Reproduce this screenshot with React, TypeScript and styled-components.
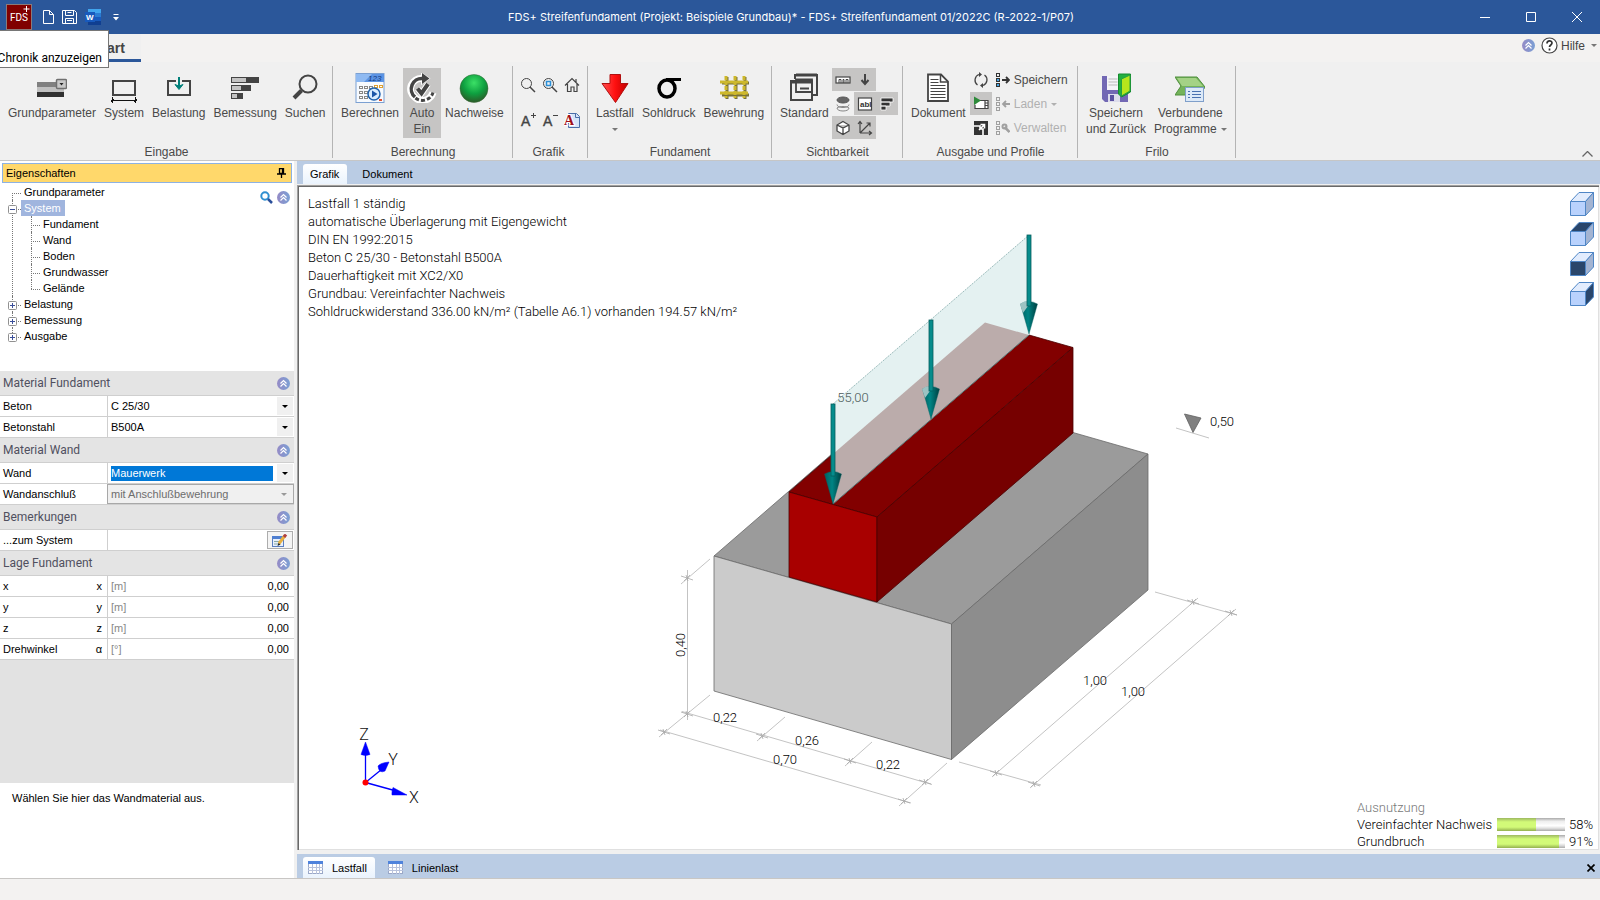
import React from 'react';
import styled, { createGlobalStyle, css } from 'styled-components';

const SANS = '"Liberation Sans", Arial, sans-serif';
const ROBOTO = 'Roboto, sans-serif';

const Global = createGlobalStyle`
  * { box-sizing: border-box; }
  body { margin: 0; background: #f3f2f1; color: #000; font-family: ${SANS}; font-size: 12px; }
  button, select, input { font: inherit; color: inherit; }
  button { border: 0; padding: 0; background: none; cursor: pointer; }
  svg { display: block; flex: none; }
`;

const App_ = styled.div`
  min-height: 100vh;
  display: flex;
  flex-direction: column;
  position: relative;
`;

/* ---------- title bar ---------- */
const TitleBar = styled.header`
  height: 34px;
  display: grid;
  grid-template-columns: 1fr auto 1fr;
  align-items: center;
  background: #2b579a;
  color: #fff;
`;
const QuickAccess = styled.div`
  display: flex;
  align-items: center;
  gap: 8px;
  padding-left: 6px;
`;
const AppLogo = styled.div`
  width: 26px;
  height: 26px;
  margin-right: 3px;
`;
const Title = styled.h1`
  margin: 0;
  padding-right: 18px;
  font: 400 11px/16px Inter, sans-serif;
  white-space: nowrap;
`;
const WindowButtons = styled.div`
  display: flex;
  justify-content: flex-end;
`;
const WindowButton = styled.button`
  width: 46px;
  height: 34px;
  display: grid;
  place-items: center;
`;
const Tooltip = styled.div`
  position: absolute;
  left: 0;
  top: 30px;
  z-index: 2;
  width: 109px;
  height: 38px;
  padding-top: 19px;
  display: flex;
  justify-content: flex-end;
  padding-right: 6px;
  overflow: hidden;
  background: #fff;
  border: 1px solid #767676;
  border-left: 0;
  font: 12px/16px ${ROBOTO};
  white-space: nowrap;
`;

/* ---------- ribbon ---------- */
const RibbonTabs = styled.nav`
  height: 28px;
  display: flex;
  align-items: stretch;
  padding-left: 77px;
  background: #f3f2f1;
`;
const RibbonTab = styled.button`
  padding: 2px 16px 0;
  background: #f0f0f0;
  border-bottom: 3px solid #2b579a;
  color: #444;
  font-size: 14px;
  font-weight: 700;
`;
const HelpArea = styled.div`
  margin-left: auto;
  padding: 0 3px 5px 0;
  display: flex;
  align-items: center;
  gap: 6px;
  color: #444;
`;
const HelpButton = styled.button`
  display: flex;
  align-items: center;
  gap: 3px;
`;
const Ribbon = styled.div`
  height: 99px;
  display: flex;
  align-items: stretch;
  padding-top: 4px;
  background: #f0f0f0;
  border-bottom: 1px solid #c6c6c6;
  color: #4a4a4a;
`;
const Group = styled.section<{ $w: number; $tight?: boolean }>`
  flex: 0 0 ${p => p.$w}px;
  height: 92px;
  padding: 2px 0 0 ${p => (p.$tight ? 4 : 8)}px;
  display: flex;
  flex-direction: column;
  justify-content: space-between;
  border-right: 1px solid #b4b4b4;
`;
const GroupBody = styled.div<{ $gap?: number }>`
  display: flex;
  align-items: flex-start;
  gap: ${p => p.$gap ?? 8}px;
`;
const GroupName = styled.h2`
  margin: 0 7px 0 0;
  font: 400 12px/12px ${SANS};
  text-align: center;
`;
const BigButton = styled.button<{ $on?: boolean }>`
  height: 70px;
  padding: 5px 0 1px;
  display: flex;
  flex-direction: column;
  align-items: center;
  line-height: 16px;
  white-space: nowrap;
  ${p => p.$on && css`
    width: 38px;
    background: #c6c5c4;
  `}
  > svg { margin-bottom: 2px; }
`;
const WithCaret = styled.span`
  height: 16px;
  display: flex;
  align-items: center;
  gap: 4px;
`;
const IconGrid = styled.div<{ $cols: number; $row: number }>`
  display: grid;
  grid-template-columns: repeat(${p => p.$cols}, 22px);
  grid-auto-rows: ${p => p.$row}px;
  row-gap: 1px;
`;
const IconButton = styled.button<{ $on?: boolean }>`
  display: grid;
  place-items: center;
  background: ${p => (p.$on ? '#c6c5c4' : 'transparent')};
`;
const ProfileList = styled.div`
  display: grid;
  grid-auto-rows: 24px;
`;
const ProfileButton = styled.button`
  display: flex;
  align-items: center;
  gap: 4px;
  &:disabled { color: #b0b0b0; }
`;
const Collapse = styled.button`
  margin: auto 7px 3px auto;
`;

/* ---------- workspace ---------- */
const Workspace = styled.main`
  flex: 1;
  display: grid;
  grid-template-columns: 294px minmax(0, 1fr);
  column-gap: 3px;
  background: #f0f0f0;
`;
const SidePanel = styled.aside`
  display: flex;
  flex-direction: column;
  background: #fff;
  font-size: 11px;
  line-height: 16px;
`;
const PanelTitle = styled.div`
  height: 20px;
  margin: 2px 2px 1px;
  padding: 0 5px 0 3px;
  display: flex;
  align-items: center;
  justify-content: space-between;
  background: #ffd86b;
  border: 1px solid #8db2e3;
`;
const TreeArea = styled.div`
  height: 187px;
  display: flex;
  justify-content: space-between;
`;
const TreeTools = styled.div`
  display: flex;
  align-items: center;
  align-self: flex-start;
  gap: 4px;
  padding: 7px 4px 0 0;
`;
const Tree = styled.ul`
  list-style: none;
  margin: 0;
  padding: 0 0 0 12px;
`;
const SubTree = styled.ul`
  list-style: none;
  margin: 0;
  padding: 0 0 0 7px;
`;
const TreeItem = styled.li<{ $first?: boolean; $last?: boolean }>`
  position: relative;
  padding-left: 12px;
  &::before {
    content: '';
    position: absolute;
    left: 0;
    top: ${p => (p.$first ? 9 : 0)}px;
    bottom: ${p => (p.$last ? 'auto' : '0')};
    height: ${p => (p.$last ? '9px' : 'auto')};
    border-left: 1px dotted #777;
  }
  &::after {
    content: '';
    position: absolute;
    left: 0;
    top: 9px;
    width: 9px;
    border-top: 1px dotted #777;
  }
`;
const TreeLabel = styled.button<{ $selected?: boolean }>`
  display: block;
  height: 16px;
  padding: 0 6px 0 0;
  text-align: left;
  ${p => p.$selected && css`
    margin-left: -3px;
    padding: 0 4px 0 3px;
    background: #a0b5de;
    color: #fff;
  `}
`;
const Toggle = styled.button`
  position: absolute;
  left: -4px;
  top: 5px;
  z-index: 1;
`;
const SectionHead = styled.div`
  height: 25px;
  padding: 0 4px 0 3px;
  display: flex;
  align-items: center;
  justify-content: space-between;
  background: #e4e4e4;
  border-bottom: 1px solid #cfcfcf;
  color: #50505f;
  font: 12px/16px ${ROBOTO};
`;
const PropRow = styled.div`
  height: 21px;
  display: grid;
  grid-template-columns: 107px minmax(0, 1fr);
  border-bottom: 1px solid #cfcfcf;
`;
const PropLabel = styled.label`
  padding: 0 5px 0 3px;
  display: flex;
  align-items: center;
  justify-content: space-between;
`;
const PropCell = styled.div<{ $disabled?: boolean }>`
  display: flex;
  align-items: center;
  padding: 1px;
  border-left: 1px solid #cfcfcf;
  ${p => p.$disabled && css`
    background: #f0f0f0;
    border: 1px solid #a8a8a8;
    color: #6d6d6d;
  `}
`;
const Select = styled.select<{ $focus?: boolean }>`
  flex: 1;
  height: 15px;
  margin: 0 4px 0 2px;
  padding: 0;
  appearance: none;
  border: 0;
  border-radius: 0;
  outline: 0;
  opacity: 1;
  line-height: 15px;
  background: ${p => (p.$focus ? '#0078d7' : 'transparent')};
  color: ${p => (p.$focus ? '#fff' : 'inherit')};
`;
const DropMark = styled.span<{ $disabled?: boolean }>`
  width: 16px;
  align-self: stretch;
  display: grid;
  place-items: center;
  background: #f0f0f0;
  color: ${p => (p.$disabled ? '#999' : '#000')};
`;
const Unit = styled.span`
  padding-left: 2px;
  color: #888;
`;
const TextField = styled.input`
  flex: 1;
  min-width: 0;
  height: 18px;
  padding: 0 4px;
  border: 0;
  outline: 0;
  background: transparent;
  text-align: right;
`;
const EditButton = styled.button`
  width: 26px;
  height: 18px;
  display: grid;
  place-items: center;
  background: #f4f4f4;
  border: 1px solid #adadad;
`;
const Filler = styled.div`
  height: 123px;
  background: #e2e2e2;
`;
const Hint = styled.p`
  flex: 1;
  margin: 0;
  padding: 7px 12px;
`;

/* ---------- drawing pane ---------- */
const Pane = styled.section`
  display: flex;
  flex-direction: column;
`;
const DocTabs = styled.div<{ $bottom?: boolean }>`
  height: ${p => (p.$bottom ? 24 : 23)}px;
  padding: 3px 5px 0 6px;
  display: flex;
  align-items: stretch;
  background: #bacce4;
  font-size: 11px;
`;
const DocTab = styled.button<{ $on?: boolean; $icon?: boolean }>`
  display: flex;
  align-items: center;
  gap: 9px;
  padding: ${p => (p.$icon ? '0 8px 0 5px' : '0 8px 0 7px')};
  margin-right: 8px;
  border-radius: 3px 3px 0 0;
  background: ${p => (p.$on ? 'linear-gradient(#fff, #eaf3fd)' : 'transparent')};
`;
const CloseTab = styled.button`
  margin-left: auto;
`;
const Canvas = styled.div`
  position: relative;
  flex: 1;
  min-height: 480px;
  margin: 1px 1px 4px 0;
  background: #fff;
  border: solid #a0a0a0;
  border-width: 1px 0 0 1px;
  box-shadow: inset 1px 1px #696969, inset -1px -1px #e0e0e0;
`;
const Model = styled.svg`
  position: absolute;
  inset: 0;
  width: 100%;
  height: 100%;
`;
const Info = styled.div`
  position: absolute;
  left: 10px;
  top: 9px;
  font: 300 13px/18px ${ROBOTO};
  color: #000;
`;
const ViewCubes = styled.div`
  position: absolute;
  right: 5px;
  top: 6px;
  display: grid;
  gap: 6px;
`;
const Usage = styled.dl`
  position: absolute;
  right: 6px;
  bottom: 0;
  margin: 0;
  display: grid;
  grid-template-columns: 136px 68px auto;
  column-gap: 4px;
  align-items: center;
  font: 300 13px/17px ${ROBOTO};
  color: #000;
  dt, dd { margin: 0; white-space: nowrap; }
`;
const UsageTitle = styled.dt`
  grid-column: 1 / -1;
  color: #777;
`;
const Bar = styled.dd`
  height: 13px;
  display: flex;
  background: linear-gradient(#aaa, #eee 25%, #fff 60%, #ddd 80%, #aaa);
`;
const BarFill = styled.span`
  background: linear-gradient(#9db860, #d2fa78 30%, #d2fa78 70%, #93b04f);
`;
const StatusBar = styled.footer`
  height: 22px;
  background: #f3f2f1;
  border-top: 1px solid #c8c6c4;
`;

/* ---------- icons ---------- */
const Caret = ({ color = 'currentColor' }: { color?: string }) => (
  <svg width="6" height="3" viewBox="0 0 6 3"><path d="M0 0h6L3 3z" fill={color} /></svg>
);
const RoundUp = () => (
  <svg width="13" height="13" viewBox="0 0 13 13">
    <defs><linearGradient id="ru" x1="0" y1="0" x2="1" y2="0"><stop offset="0" stopColor="#958bc6" /><stop offset="1" stopColor="#7b9fd4" /></linearGradient></defs>
    <circle cx="6.5" cy="6.5" r="6.5" fill="url(#ru)" />
    <path d="M3.500 6.500l3-3 3 3M3.500 9.500l3-3 3 3" fill="none" stroke="#fff" strokeWidth="1.200" />
  </svg>
);
const I = ({ children, s = 30 }: { children: React.ReactNode; s?: number }) => (
  <svg width={s} height={s} viewBox={`0 0 ${s} ${s}`} fill="none" stroke="#444" strokeWidth="2">{children}</svg>
);
const IcoParams = () => (
  <I><g stroke="none"><path d="M0 9h27v5H0z" fill="#808080" /><path d="M0 14h27v5H0z" fill="#c0c0c0" /><path d="M0 19h27v5H0z" fill="#303030" /></g>
    <rect x="19.500" y="6.500" width="10" height="9" rx="1" fill="#c8c8c8" stroke="#707070" strokeWidth="1.500" /><path d="M22.500 10h4l-2 2.500z" fill="#222" stroke="none" /></I>
);
const IcoSystem = () => (
  <I><rect x="4" y="8" width="22" height="14" /><path d="M2 27.500h26M3.500 24v6M26.500 24v6M2 29l3-3M25 29l3-3" stroke="#111" strokeWidth="1" /></I>
);
const IcoLoad = () => (
  <I><rect x="4" y="8" width="22" height="14" /><path d="M12 8h6" stroke="#f0f0f0" strokeWidth="3" /><path d="M15 4v10" stroke="#00807a" /><path d="M11 11.500l4 5 4-5-4 1.500z" fill="#00807a" stroke="#00807a" strokeWidth="1" /></I>
);
const IcoDesign = () => (
  <I><g stroke="none"><path d="M1 4h28v6H1zM1 12h20v6H1zM1 20h12v6H1z" fill="#444" /><path d="M2 5h14v4H2zM2 13h9v4H2zM2 21h5v4H2z" fill="#c4c4c4" /></g></I>
);
const IcoSearch = () => (
  <I><circle cx="18" cy="11" r="8.500" /><path d="M11.500 17.500L4 25" strokeWidth="4" /></I>
);
const IcoCalc = () => (
  <I><rect x="1" y=".5" width="28" height="29" fill="#f7fafe" stroke="#7ba0d2" strokeWidth="1" />
    <path d="M1 1h28v8H1z" fill="#5b93e4" stroke="none" /><path d="M1 1h16L9 9H1z" fill="#8fbaf2" stroke="none" />
    <text x="13" y="8" fontSize="8" fontStyle="italic" fontFamily="Liberation Sans" fill="#123a80" stroke="none">123</text>
    <g fill="#fff" stroke="#888" strokeWidth="1">
      {[13, 18, 23].map(y => [4, 9, 14].map(x => <rect key={`${x}${y}`} x={x + 0.5} y={y + 0.5} width="3" height="2" />))}
      <g stroke="#e0a030"><rect x="19.500" y="12.500" width="3" height="2" /><rect x="24.500" y="12.500" width="3" height="2" /></g>
    </g>
    <path d="M24 26h3v2h-3z" fill="#e05030" stroke="none" />
    <circle cx="19" cy="21" r="6" fill="#d8ecff" stroke="#1f62ae" strokeWidth="1.500" /><path d="M17 17.500l5.500 3.500-5.500 3.500z" fill="#1b56a8" stroke="none" /></I>
);
const IcoAuto = () => (
  <I>
    <g stroke="#fff" strokeWidth="7"><path d="M18 5.500h-3A10.500 10.500 0 0 0 8 24.500A11 11 0 0 0 26 19.500" /></g>
    <path d="M14 -1l9.500 6.500L14 12z" fill="#fff" stroke="none" />
    <path d="M17 5.500h-1.500A10.500 10.500 0 0 0 8 24" strokeWidth="3.500" />
    <path d="M15 0l7.500 5.500-7.500 5.500z" fill="#444" stroke="none" />
    <path d="M8.500 25A11 11 0 0 0 26 19.500" strokeWidth="3" strokeDasharray="4 2" />
    <path d="M10.500 15.500l4 5 6.500-9.500" stroke="#fff" strokeWidth="6" /><path d="M10.500 15.500l4 5 6.500-9.500" strokeWidth="4" />
  </I>
);
const IcoOk = () => (
  <I><defs><radialGradient id="gr" cx=".5" cy=".3" r=".7"><stop offset="0" stopColor="#3be066" /><stop offset=".55" stopColor="#0ea040" /><stop offset="1" stopColor="#2c5a28" /></radialGradient></defs>
    <circle cx="15" cy="15.500" r="14" fill="url(#gr)" stroke="#3a6a3a" strokeWidth=".5" /></I>
);
const IcoZoom = () => <I s={16}><circle cx="6.500" cy="6.500" r="5" strokeWidth="1" /><path d="M10 10l5 5" strokeWidth="1.500" /></I>;
const IcoZoomBox = () => <I s={16}><circle cx="6.500" cy="6.500" r="5" strokeWidth="1" /><rect x="4.500" y="4.500" width="4" height="4" stroke="#2a8fd8" strokeWidth="1.500" /><path d="M10 10l5 5" strokeWidth="1.500" /></I>;
const IcoHome = () => <I s={16}><path d="M1 8.500L8 1.500l7 7M3.500 7v7.500H7V10h3v4.500h3V7M12 5V2" strokeWidth="1.200" /></I>;
const IcoFont = ({ sign }: { sign: string }) => (
  <I s={16}><text x="1" y="14" fontSize="14" fontFamily="Liberation Sans" fill="#444" stroke="#444" strokeWidth=".4">A</text><path d={sign} strokeWidth="1" /></I>
);
const IcoFontPage = () => (
  <I s={16}><path d="M4.500 1.500h8l3 3v11h-11z" fill="#d5e4f8" stroke="#4a6ea8" strokeWidth="1" /><path d="M11.500 1.500v4h4" stroke="#4a6ea8" strokeWidth="1" /><text x="0" y="13" fontSize="14" fontWeight="700" fontFamily="Liberation Serif" fill="#a01018" stroke="#fff" strokeWidth="2" paintOrder="stroke">A</text></I>
);
const IcoRedArrow = () => (
  <I><defs><linearGradient id="ra"><stop offset="0" stopColor="#ff5050" /><stop offset=".5" stopColor="#ff1010" /><stop offset="1" stopColor="#c00000" /></linearGradient></defs>
    <path d="M10 1.500h10.500v9H28L15.500 29.500 2 10.500h8z" fill="url(#ra)" stroke="#b01010" strokeWidth="1" /></I>
);
const IcoSigma = () => <I><ellipse cx="13" cy="15.500" rx="8" ry="8.500" stroke="#000" strokeWidth="3.500" /><path d="M12 6.500h15" stroke="#000" strokeWidth="3" /></I>;
const IcoMesh = () => (
  <I><g stroke="#77713a" strokeWidth="3"><path d="M3 10h27M3 22h27M8 4v22M17 4v22M26 4v22" /></g><g stroke="#cdb82c" strokeWidth="3"><path d="M1 9h28M1 20h28" /><path d="M7 3v22M16 3v22M25 3v22" strokeDasharray="4 1" /></g></I>
);
const IcoWindows = () => (
  <I><path d="M6 6V2h22v20h-4" /><path d="M7 2h21" strokeWidth="3" /><path d="M2 8h21v19H2z" fill="#f0f0f0" /><path d="M2 9h21" strokeWidth="3" /><path d="M7 13V6.500h16V19H7v-6M11 15.500h9" strokeWidth="1.800" /></I>
);
const IcoRuler = () => <I s={16}><rect x="1" y="5" width="14" height="6" fill="#fff" strokeWidth="1.200" /><path d="M4 11V7.500h2V11M8 11V7.500h1V11M11 11V7.500h2V11" strokeWidth="1" /></I>;
const IcoDown = () => <I s={16}><path d="M8 2v10" strokeWidth="2" /><path d="M4.500 8L8 12 11.500 8" strokeWidth="2" /></I>;
const IcoLayers = () => <I s={16}><ellipse cx="8" cy="4" rx="6" ry="3" fill="#666" stroke="#555" strokeWidth="1" /><path d="M2 8.500c0 4 12 4 12 0M2 12c0 4 12 4 12 0M2 12c2-2 10-2 12 0" stroke="#888" strokeWidth="1" /></I>;
const IcoAbl = () => <I s={16}><rect x="1.500" y="2" width="13" height="12" fill="#fff" strokeWidth="1.200" /><text x="3" y="11" fontSize="8" fontWeight="700" fontFamily="Liberation Sans" fill="#333" stroke="none">abl</text></I>;
const IcoBars = () => <I s={16}><path d="M2 2h12v4H2zM2 6h9v4H2zM2 10h5v4H2z" fill="#333" stroke="#fff" strokeWidth=".8" /></I>;
const IcoCube = () => <I s={16}><path d="M8 1.500l6 3.500v6l-6 3.500L2 11V5zM2 5l6 3 6-3M8 8v6.500" fill="#fff" strokeWidth="1.300" /></I>;
const IcoAxes = () => <I s={16}><path d="M3 13V2M3 13h11M3 13L13 3M1 4l2-2.500L5 4M12 11l2.500 2-2.500 2M9.500 3H13v3.500" strokeWidth="1.200" /></I>;
const IcoDoc = () => (
  <I><path d="M5 1.500h13l7 7V28H5z" fill="#fff" strokeWidth="1.800" /><path d="M17.500 2v7H25" strokeWidth="1.500" /><path d="M7.500 6.500h8M7.500 9.500h8M7.500 12.500h15M7.500 15.500h15M7.500 18.500h15M7.500 21.500h15M7.500 24.500h15" strokeWidth="1.200" /></I>
);
const IcoRefresh = () => <I s={16}><path d="M6 2.500A6 6 0 0 0 4.500 13M10 13.500A6 6 0 0 0 11.500 3" strokeWidth="1.300" /><path d="M6 0v5l3-2.500zM10 11v5l-3-2.500z" fill="#444" stroke="none" /></I>;
const IcoPlay = () => <I s={16}><path d="M6 4.500h9v8H2V9" fill="#fff" strokeWidth="1.200" /><path d="M12 5v8" strokeWidth="1.200" /><path d="M12 7h3M12 9.500h3" strokeWidth="1" /><path d="M1 .5L8 4.500 1 9z" fill="#2d8a3a" stroke="none" /></I>;
const IcoExpand = () => <I s={16}><path d="M1 1h14v14H1z" fill="#333" stroke="none" /><path d="M1 6h6v3h3v6M6 10l5-5M7.500 4.500h4v4" stroke="#fff" strokeWidth="1.600" /></I>;
const IcoProfile = ({ kind }: { kind: 'save' | 'load' | 'manage' }) => {
  const c = kind === 'save' ? '#333' : '#a0a0a0';
  const fill = kind === 'save' ? '#4aa8e8' : 'none';
  return (
    <svg width="14" height="14" viewBox="0 0 14 14" fill="none" stroke={c}>
      <rect x=".5" y=".5" width="3" height="3" /><rect x=".5" y="5.500" width="3" height="3" fill={fill} /><rect x=".5" y="10.500" width="3" height="3" fill={fill} />
      {kind === 'save' && <path d="M6 7h7M10 4l3 3-3 3" strokeWidth="1.800" />}
      {kind === 'load' && <path d="M14 7H7M10 4L7 7l3 3" strokeWidth="1.800" />}
      {kind === 'manage' && <><path d="M8.500 6l5 5" strokeWidth="2.500" /><circle cx="8.500" cy="5.500" r="2" strokeWidth="2" /></>}
    </svg>
  );
};
const IcoSaveBack = () => (
  <I><g stroke="none"><path d="M1 3h26v26H4l-3-3z" fill="#7268b4" /><path d="M6 3h13v14H6z" fill="#f4f4f8" /><path d="M7 21h12v8H7z" fill="#dcdcec" /><path d="M9 22h4v6H9z" fill="#5a50a0" /></g>
    <path d="M7.500 6h9M7.500 9h9M7.500 12h9" stroke="#bbb" strokeWidth="1" />
    <path d="M17.500 1h12v18l-9 5-3-3z" fill="#22b040" stroke="#168a30" strokeWidth="1" /><path d="M20.500 6l8.500-4v16l-8.500 5z" fill="#b7e61c" stroke="#25a040" strokeWidth="1" /></I>
);
const IcoLinked = () => (
  <I><path d="M0 4h22l8 10-5 8H0l6-9z" fill="#74b35a" stroke="#4f8f3c" strokeWidth="1" /><path d="M2 5h19l7 8H7z" fill="#a4d286" stroke="none" />
    <rect x="10.500" y="14.500" width="18" height="14" fill="#dce9f8" stroke="#7f9fca" strokeWidth="1" /><path d="M13 18.500h2M17 18.500h9M13 21.500h2M17 21.500h9M13 24.500h2M17 24.500h9" stroke="#4a72b0" strokeWidth="1" /></I>
);
const IcoTable = () => (
  <svg width="15" height="13" viewBox="0 0 15 13"><rect x=".5" y=".5" width="14" height="12" fill="#fff" stroke="#9aa8c8" /><path d="M0 0h15v3H0z" fill="#4f83dc" /><path d="M0 6.500h15M0 9.500h15M4.500 3v10M8.500 3v10M11.500 3v10" stroke="#b8c2dc" /></svg>
);
const ToggleBox = ({ open }: { open?: boolean }) => (
  <svg width="9" height="9" viewBox="0 0 9 9"><rect x=".5" y=".5" width="8" height="8" rx="1" fill="#fff" stroke="#919191" /><path d={open ? 'M2 4.500h5' : 'M2 4.500h5M4.500 2v5'} stroke="#3b4f9a" /></svg>
);
const ViewCube = ({ dark }: { dark?: 'top' | 'front' | 'side' }) => (
  <svg width="24" height="24" viewBox="0 0 24 24" stroke="#4f86c6" strokeWidth="1">
    <path d="M.5 9.500L9 .5h14.500L15.500 9.500z" fill={dark === 'top' ? '#2a466b' : '#e2ecfd'} />
    <path d="M15.500 9.500l8-9v14.500l-8 8.500z" fill={dark === 'side' ? '#2a466b' : '#a3b4d2'} />
    <path d="M.5 9.500h15v14H.5z" fill={dark === 'front' ? '#2a466b' : '#b9d2fd'} />
  </svg>
);

/* ---------- 3D model ---------- */
const LoadArrow = ({ x, top, tip, veiled }: { x: number; top: number; tip: number; veiled?: boolean }) => (
  <g>
    <path d={`M${x - 8.5} ${tip - 30}q8.500 -5 17 0L${x} ${tip}z`} fill="url(#cone)" stroke="#04605f" strokeWidth=".4" />
    {veiled && <path d={`M${x - 9} ${tip - 30}q5 -4 8 -2v4l-5 7z`} fill="#9cc3c3" />}
    <rect x={x - 2} y={top} width="4" height={tip - 28 - top} fill="#068c8c" stroke="#055e5e" strokeWidth=".8" />
  </g>
);
const Tick = ({ x, y }: { x: number; y: number }) => (
  <path d={`M${x - 6} ${y - 2}l12 4M${x - 3} ${y + 3}l6 -6M${x - 1} ${y - 3}l2 6`} />
);
const ticks: [number, number][] = [
  [687, 578], [687, 714], [762, 736], [850, 761], [925, 782], [664, 732], [904, 801],
  [996, 773], [1193, 602], [1034, 784], [1231, 613],
];
const dims: [number, number, string][] = [
  [725, 722, '0,22'], [807, 745, '0,26'], [785, 764, '0,70'], [888, 769, '0,22'], [1095, 685, '1,00'], [1133, 696, '1,00'], [1222, 426, '0,50'],
];
const FoundationModel = () => (
  <Model viewBox="298 186 1301 664" preserveAspectRatio="xMidYMid meet" role="img" aria-label="Streifenfundament">
    <defs><linearGradient id="cone"><stop offset="0" stopColor="#005f5f" /><stop offset=".45" stopColor="#008484" /><stop offset="1" stopColor="#003f40" /></linearGradient></defs>
    <g stroke="#6a6a6a" strokeWidth=".8" strokeLinejoin="round">
      <path d="M714 556L951.500 624 1148 454 910.500 386z" fill="#9b9b9b" />
      <path d="M714 556L951.500 624V759.500L714 691z" fill="#cbcbcb" />
      <path d="M951.500 624L1148 454V590L951.500 759.500z" fill="#8d8d8d" />
    </g>
    <g stroke="#4a0000" strokeWidth=".8" strokeLinejoin="round">
      <path d="M789 492L985 322.500 1073 347.500 877 517z" fill="#820000" />
      <path d="M789 492L877 517V602L789 577z" fill="#a80000" />
      <path d="M877 517L1073 347.500V433L877 602z" fill="#760000" />
    </g>
    <path d="M833 404L1029 235V335L833 504z" fill="#e4f1f1" />
    <path d="M833 454L985 322.500 1029 335 833 504z" fill="#bbacab" />
    <path d="M833 404L1029 235" stroke="#9cbcbc" strokeWidth="1" strokeDasharray="2 1" />
    <path d="M833 504L1029 335" stroke="#506b6b" strokeWidth="1" />
    <LoadArrow x={833} top={404} tip={504} />
    <LoadArrow x={931} top={320} tip={419} veiled />
    <LoadArrow x={1029} top={235} tip={334} veiled />
    <g fill="none" stroke="#bcbcbc" strokeWidth=".9">
      <path d="M687.500 570V720M681 584l29-25M659 737l51-42M682 711.500l250 73M660 730l251 73M757 741l28-24M845 766l27-24M899 806l48-43M959 762l82 23M1155 592l82 23M992 777l206-179M1030 788l206-179" />
      <path d="M1176 428l33 10" />
      <g stroke="#a8a8a8" strokeWidth=".8">{ticks.map(([x, y]) => <Tick key={`${x}-${y}`} x={x} y={y} />)}</g>
    </g>
    <path d="M1184.500 414l16.500 4-8 14.500z" fill="#808080" stroke="#606060" strokeWidth=".8" />
    <g fontFamily="Roboto" fontWeight="300" fontSize="13" fill="#000" textAnchor="middle">
      {dims.map(([x, y, t]) => <text key={`${x}`} x={x} y={y}>{t}</text>)}
      <text transform="translate(685 645) rotate(-90)">0,40</text>
      <text x="853" y="402" fill="#4a5a5a">55,00</text>
    </g>
    <g stroke="#00f" strokeWidth="1.300" fill="#00f">
      <path d="M365.500 782.500V750M365.500 782.500l16-13M365.500 782.500l29 8" />
      <path d="M365.500 742l4.500 12.500q-4.500 2-9 0zM389 762l-4 9q-6 3-7-5q2-3 11-4zM407 795l-14-7.500q-1.500 4-1 7.500z" strokeWidth=".5" />
      <circle cx="365.500" cy="782.500" r="3" fill="#f00" stroke="none" />
    </g>
    <g fontFamily="Roboto" fontWeight="300" fontSize="16" fill="#111" textAnchor="middle">
      <text x="364" y="740">Z</text><text x="393" y="765">Y</text><text x="414" y="803">X</text>
    </g>
  </Model>
);

const info = [
  'Lastfall 1 ständig',
  'automatische Überlagerung mit Eigengewicht',
  'DIN EN 1992:2015',
  'Beton C 25/30 - Betonstahl B500A',
  'Dauerhaftigkeit mit XC2/X0',
  'Grundbau: Vereinfachter Nachweis',
  'Sohldruckwiderstand 336.00 kN/m² (Tabelle A6.1) vorhanden 194.57 kN/m²',
];
const usage = [{ name: 'Vereinfachter Nachweis', value: 58 }, { name: 'Grundbruch', value: 91 }];
const position = [['x', 'x', '[m]'], ['y', 'y', '[m]'], ['z', 'z', '[m]'], ['Drehwinkel', 'α', '[°]']];

const Section = ({ title }: { title: string }) => (
  <SectionHead><span>{title}</span><button aria-label={`${title} einklappen`}><RoundUp /></button></SectionHead>
);
const Choice = ({ id, label, value, focus, disabled }: { id: string; label: string; value: string; focus?: boolean; disabled?: boolean }) => (
  <PropRow>
    <PropLabel htmlFor={id}>{label}</PropLabel>
    <PropCell $disabled={disabled}>
      <Select id={id} $focus={focus} disabled={disabled} defaultValue={value}><option>{value}</option></Select>
      <DropMark $disabled={disabled}><Caret /></DropMark>
    </PropCell>
  </PropRow>
);

export default function App() {
  return (
    <App_>
      <Global />
      <TitleBar>
        <QuickAccess>
          <AppLogo>
            <svg width="26" height="26" viewBox="0 0 26 26">
              <rect x=".5" y=".5" width="25" height="25" fill="#800000" stroke="#8a7a7a" />
              <text x="4" y="17" fontSize="10" fontFamily="Roboto" fill="#fff">FDS</text>
              <path d="M20.500 2v6M17.500 5h6" stroke="#fff" />
            </svg>
          </AppLogo>
          <button aria-label="Neu"><svg width="11" height="14" viewBox="0 0 11 14" fill="none" stroke="#fff"><path d="M.5.5h6l4 4v9H.500zM6.500.5v4h4" /></svg></button>
          <button aria-label="Sichern"><svg width="15" height="14" viewBox="0 0 15 14" fill="none" stroke="#fff"><path d="M.5.5h12l2 2v11H.500zM3.500.5v5h8v-5M5.500 2.500h4M3.500 13.500v-5h8v5M5 10.500h5" /></svg></button>
          <button aria-label="Word"><svg width="16" height="16" viewBox="0 0 16 16"><path d="M3 0h13v4H3z" fill="#41a5ee" /><path d="M3 4h13v4H3z" fill="#2b7cd3" /><path d="M3 8h13v4H3z" fill="#185abd" /><path d="M3 12h13v4H3z" fill="#103f91" /><path d="M0 3h10v10H0z" fill="#185abd" /><text x="1" y="11" fontSize="8" fontWeight="700" fontFamily="Liberation Sans" fill="#fff">W</text></svg></button>
          <button aria-label="Anpassen"><svg width="14" height="7" viewBox="0 0 14 7"><path d="M4.500 0h5v1h-5zM4 3h6L7 6.500z" fill="#fff" /></svg></button>
        </QuickAccess>
        <Title>FDS+ Streifenfundament (Projekt: Beispiele Grundbau)* - FDS+ Streifenfundament 01/2022C (R-2022-1/P07)</Title>
        <WindowButtons>
          <WindowButton aria-label="Minimieren"><svg width="10" height="10" stroke="#fff"><path d="M0 5.500h10" /></svg></WindowButton>
          <WindowButton aria-label="Maximieren"><svg width="10" height="10" stroke="#fff" fill="none"><path d="M.5.5h9v9h-9z" /></svg></WindowButton>
          <WindowButton aria-label="Schließen"><svg width="10" height="10" stroke="#fff"><path d="M0 0l10 10M10 0L0 10" /></svg></WindowButton>
        </WindowButtons>
      </TitleBar>
      <Tooltip role="tooltip">Chronik anzuzeigen</Tooltip>

      <RibbonTabs>
        <RibbonTab>Start</RibbonTab>
        <HelpArea>
          <button aria-label="Einklappen"><RoundUp /></button>
          <HelpButton>
            <svg width="17" height="17" viewBox="0 0 17 17"><circle cx="8.500" cy="8.500" r="7.500" fill="#fff" stroke="#444" strokeWidth="1.200" /><path d="M6 6.500c0-3.500 5-3.300 5-.4 0 1.900-2.500 1.900-2.500 4M8.500 11.500v2" fill="none" stroke="#333" strokeWidth="1.700" /></svg>
            Hilfe
          </HelpButton>
          <Caret color="#777" />
        </HelpArea>
      </RibbonTabs>

      <Ribbon>
        <Group $w={333}>
          <GroupBody>
            <BigButton><IcoParams />Grundparameter</BigButton>
            <BigButton><IcoSystem />System</BigButton>
            <BigButton><IcoLoad />Belastung</BigButton>
            <BigButton><IcoDesign />Bemessung</BigButton>
            <BigButton><IcoSearch />Suchen</BigButton>
          </GroupBody>
          <GroupName>Eingabe</GroupName>
        </Group>
        <Group $w={180}>
          <GroupBody $gap={4}>
            <BigButton><IcoCalc />Berechnen</BigButton>
            <BigButton $on><IcoAuto />Auto<span>Ein</span></BigButton>
            <BigButton><IcoOk />Nachweise</BigButton>
          </GroupBody>
          <GroupName>Berechnung</GroupName>
        </Group>
        <Group $w={75} $tight>
          <IconGrid $cols={3} $row={34}>
            <IconButton aria-label="Zoom"><IcoZoom /></IconButton>
            <IconButton aria-label="Zoom Fenster"><IcoZoomBox /></IconButton>
            <IconButton aria-label="Gesamtansicht"><IcoHome /></IconButton>
            <IconButton aria-label="Schrift größer"><IcoFont sign="M11 3.500h5M13.500 1v5" /></IconButton>
            <IconButton aria-label="Schrift kleiner"><IcoFont sign="M11 3.500h5" /></IconButton>
            <IconButton aria-label="Schriftart"><IcoFontPage /></IconButton>
          </IconGrid>
          <GroupName>Grafik</GroupName>
        </Group>
        <Group $w={184}>
          <GroupBody>
            <BigButton><IcoRedArrow />Lastfall<WithCaret><Caret color="#777" /></WithCaret></BigButton>
            <BigButton><IcoSigma />Sohldruck</BigButton>
            <BigButton><IcoMesh />Bewehrung</BigButton>
          </GroupBody>
          <GroupName>Fundament</GroupName>
        </Group>
        <Group $w={131}>
          <GroupBody $gap={3}>
            <BigButton><IcoWindows />Standard</BigButton>
            <IconGrid $cols={3} $row={23}>
              <IconButton $on aria-label="Maße"><IcoRuler /></IconButton>
              <IconButton $on aria-label="Lasten"><IcoDown /></IconButton>
              <span />
              <IconButton aria-label="Schichten"><IcoLayers /></IconButton>
              <IconButton $on aria-label="Beschriftung"><IcoAbl /></IconButton>
              <IconButton $on aria-label="Ausnutzung"><IcoBars /></IconButton>
              <IconButton $on aria-label="Körper"><IcoCube /></IconButton>
              <IconButton $on aria-label="Achsen"><IcoAxes /></IconButton>
            </IconGrid>
          </GroupBody>
          <GroupName>Sichtbarkeit</GroupName>
        </Group>
        <Group $w={175}>
          <GroupBody $gap={4}>
            <BigButton><IcoDoc />Dokument</BigButton>
            <IconGrid $cols={1} $row={23}>
              <IconButton aria-label="Aktualisieren"><IcoRefresh /></IconButton>
              <IconButton $on aria-label="Vorschau"><IcoPlay /></IconButton>
              <IconButton aria-label="Erweitern"><IcoExpand /></IconButton>
            </IconGrid>
            <ProfileList>
              <ProfileButton><IcoProfile kind="save" />Speichern</ProfileButton>
              <ProfileButton disabled><IcoProfile kind="load" />Laden <Caret color="#b0b0b0" /></ProfileButton>
              <ProfileButton disabled><IcoProfile kind="manage" />Verwalten</ProfileButton>
            </ProfileList>
          </GroupBody>
          <GroupName>Ausgabe und Profile</GroupName>
        </Group>
        <Group $w={158}>
          <GroupBody>
            <BigButton><IcoSaveBack />Speichern<span>und Zurück</span></BigButton>
            <BigButton><IcoLinked />Verbundene<WithCaret>Programme <Caret color="#777" /></WithCaret></BigButton>
          </GroupBody>
          <GroupName>Frilo</GroupName>
        </Group>
        <Collapse aria-label="Menüband minimieren"><svg width="11" height="6" viewBox="0 0 11 6"><path d="M.5 5.500l5-5 5 5" fill="none" stroke="#666" strokeWidth="1.300" /></svg></Collapse>
      </Ribbon>

      <Workspace>
        <SidePanel>
          <PanelTitle>
            Eigenschaften
            <svg width="9" height="10" viewBox="0 0 9 10" fill="none" stroke="#000"><path d="M2.500.5h4v5h-4zM5.500 0v6M0 6h9M4.500 6v4" strokeWidth="1.300" /></svg>
          </PanelTitle>
          <TreeArea>
            <Tree>
              <TreeItem $first><TreeLabel>Grundparameter</TreeLabel></TreeItem>
              <TreeItem>
                <Toggle aria-label="System zuklappen"><ToggleBox open /></Toggle>
                <TreeLabel $selected>System</TreeLabel>
                <SubTree>
                  {['Fundament', 'Wand', 'Boden', 'Grundwasser', 'Gelände'].map((t, i) => (
                    <TreeItem key={t} $last={i === 4}><TreeLabel>{t}</TreeLabel></TreeItem>
                  ))}
                </SubTree>
              </TreeItem>
              {['Belastung', 'Bemessung', 'Ausgabe'].map((t, i) => (
                <TreeItem key={t} $last={i === 2}>
                  <Toggle aria-label={`${t} aufklappen`}><ToggleBox /></Toggle>
                  <TreeLabel>{t}</TreeLabel>
                </TreeItem>
              ))}
            </Tree>
            <TreeTools>
              <button aria-label="Suchen"><svg width="13" height="13" viewBox="0 0 13 13" fill="none"><circle cx="5" cy="5" r="3.700" stroke="#2f8fd0" strokeWidth="2" /><path d="M8 8l4 4" stroke="#2a4f9a" strokeWidth="2.500" /></svg></button>
              <button aria-label="Alle einklappen"><RoundUp /></button>
            </TreeTools>
          </TreeArea>

          <Section title="Material Fundament" />
          <Choice id="beton" label="Beton" value="C 25/30" />
          <Choice id="stahl" label="Betonstahl" value="B500A" />
          <Section title="Material Wand" />
          <Choice id="wand" label="Wand" value="Mauerwerk" focus />
          <Choice id="anschluss" label="Wandanschluß" value="mit Anschlußbewehrung" disabled />
          <Section title="Bemerkungen" />
          <PropRow>
            <PropLabel htmlFor="bemerkung">...zum System</PropLabel>
            <PropCell>
              <TextField id="bemerkung" />
              <EditButton aria-label="Bemerkung bearbeiten">
                <svg width="16" height="13" viewBox="0 0 16 13"><rect x=".5" y="2.500" width="11" height="10" fill="#e8f0fc" stroke="#5b7fc0" /><path d="M0 2h12v3H0z" fill="#4f7fd0" /><path d="M2 7.500h7M2 10h5" stroke="#8aa" /><path d="M7 9.500l6-8" stroke="#e8b040" strokeWidth="3" /><path d="M12 3l2-2.500" stroke="#b04040" strokeWidth="3" /><path d="M5.500 12l1-3 2 1.500z" fill="#222" /></svg>
              </EditButton>
            </PropCell>
          </PropRow>
          <Section title="Lage Fundament" />
          {position.map(([name, sym, unit]) => (
            <PropRow key={name}>
              <PropLabel htmlFor={`pos-${name}`}><span>{name}</span><span>{sym}</span></PropLabel>
              <PropCell><Unit>{unit}</Unit><TextField id={`pos-${name}`} defaultValue="0,00" /></PropCell>
            </PropRow>
          ))}
          <Filler />
          <Hint>Wählen Sie hier das Wandmaterial aus.</Hint>
        </SidePanel>

        <Pane>
          <DocTabs>
            <DocTab $on>Grafik</DocTab>
            <DocTab>Dokument</DocTab>
          </DocTabs>
          <Canvas>
            <FoundationModel />
            <Info>{info.map(t => <div key={t}>{t}</div>)}</Info>
            <ViewCubes>
              <button aria-label="Isometrie"><ViewCube /></button>
              <button aria-label="Draufsicht"><ViewCube dark="top" /></button>
              <button aria-label="Vorderansicht"><ViewCube dark="front" /></button>
              <button aria-label="Seitenansicht"><ViewCube dark="side" /></button>
            </ViewCubes>
            <Usage>
              <UsageTitle>Ausnutzung</UsageTitle>
              {usage.map(u => (
                <React.Fragment key={u.name}>
                  <dt>{u.name}</dt>
                  <Bar><BarFill style={{ width: `${u.value}%` }} /></Bar>
                  <dd>{u.value}%</dd>
                </React.Fragment>
              ))}
            </Usage>
          </Canvas>
          <DocTabs $bottom>
            <DocTab $on $icon><IcoTable />Lastfall</DocTab>
            <DocTab $icon><IcoTable />Linienlast</DocTab>
            <CloseTab aria-label="Schließen"><svg width="8" height="8" viewBox="0 0 8 8"><path d="M.5.5l7 7M7.500.5l-7 7" stroke="#000" strokeWidth="1.700" /></svg></CloseTab>
          </DocTabs>
        </Pane>
      </Workspace>
      <StatusBar />
    </App_>
  );
}
